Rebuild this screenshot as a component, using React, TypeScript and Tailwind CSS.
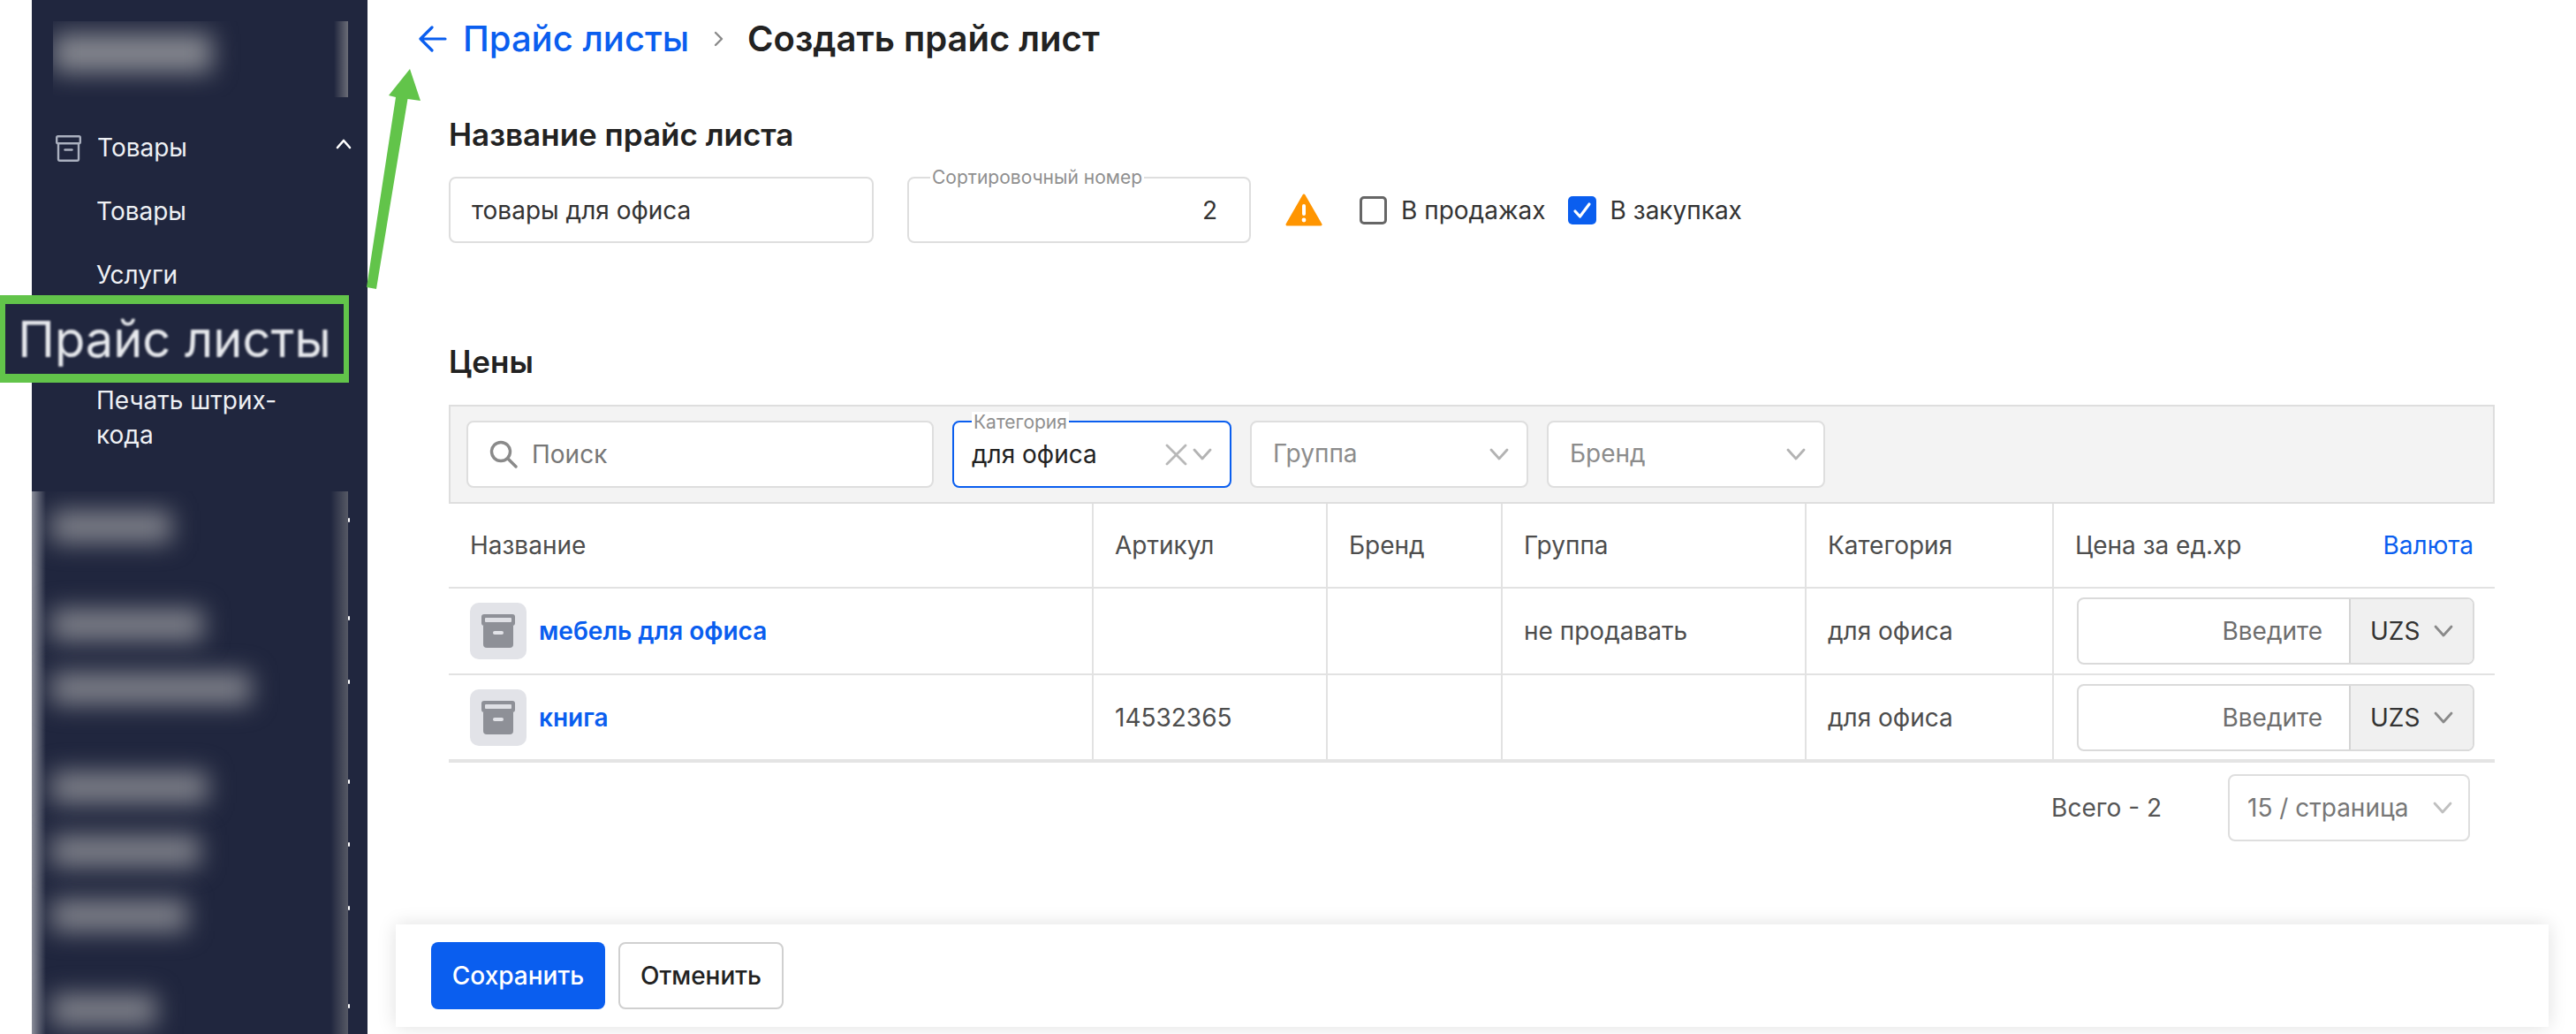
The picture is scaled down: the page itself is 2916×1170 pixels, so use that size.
import type { ReactNode } from 'react';

const blurredRows = [
  { width: 'w-[136px]', offset: 'mt-[22px]' },
  { width: 'w-[172px]', offset: 'mt-[75px]' },
  { width: 'w-[226px]', offset: 'mt-[36px]' },
  { width: 'w-[177px]', offset: 'mt-[76px]' },
  { width: 'w-[168px]', offset: 'mt-[36px]' },
  { width: 'w-[154px]', offset: 'mt-[37px]' },
  { width: 'w-[119px]', offset: 'mt-[71px]' },
];

// clipped chevrons that stick out of the blurred block
const markOffsets = ['mt-[30px]', 'mt-[106px]', 'mt-[67px]', 'mt-[108px]', 'mt-[66px]', 'mt-[67px]', 'mt-[106px]'];

const rows = [
  { name: 'мебель для офиса', sku: '', group: 'не продавать', category: 'для офиса' },
  { name: 'книга', sku: '14532365', group: '', category: 'для офиса' },
];

const tableCols = 'grid-cols-[730px_265px_198px_344px_280px_1fr]';

function Chevron({ className = 'text-[#b3b3b3]' }: { className?: string }) {
  return (
    <svg className={`h-[14px] w-[22px] shrink-0 ${className}`} viewBox="0 0 22 14" fill="none" stroke="currentColor" strokeWidth="2.8" strokeLinecap="round" strokeLinejoin="round">
      <path d="M2 2l9 10 9-10" />
    </svg>
  );
}

function ArchiveFilled() {
  return (
    <svg className="h-[38px] w-[38px]" viewBox="0 0 38 38">
      <rect x="0" y="0" width="38" height="13" rx="3" fill="#8e9097" />
      <rect x="4" y="4" width="30" height="5" rx="1" fill="#dfe0e5" />
      <path d="M2 13h34v21a4 4 0 0 1-4 4H6a4 4 0 0 1-4-4z" fill="#8e9097" />
      <rect x="13" y="19" width="12" height="4" rx="2" fill="#e2e3e8" />
    </svg>
  );
}

function SelectBox({ label }: { label: string }) {
  return (
    <div className="flex h-[76px] w-[315px] items-center justify-between rounded-[8px] border-2 border-[#dedede] bg-white pl-[24px] pr-[20px] text-[28px] text-[#8c8c8c]">
      <span className="-mt-[2px]">{label}</span>
      <Chevron />
    </div>
  );
}

function Cell({ children, last }: { children?: ReactNode; last?: boolean }) {
  return (
    <div className={`flex items-center pl-[24px] text-[28px] text-[#4d4d4d] ${last ? '' : 'border-r-2 border-[#e2e2e2]'}`}>
      {children}
    </div>
  );
}

function PriceInput() {
  return (
    <div className="ml-[2px] flex h-[76px] w-[450px] overflow-hidden rounded-[8px] border-2 border-[#dadada]">
      <div className="flex flex-1 items-center justify-end pr-[30px] text-[28px] text-[#6e6e6e]">Введите</div>
      <div className="flex w-[140px] items-center gap-[16px] border-l-2 border-[#d4d4d4] bg-[#f0f0f0] pl-[22px] text-[28px] text-[#333]">
        UZS
        <Chevron className="text-[#8a8a8a]" />
      </div>
    </div>
  );
}

export default function App() {
  return (
    <div className="relative flex h-[1170px] w-[2916px] overflow-hidden bg-white font-[Inter,'Liberation_Sans',sans-serif]">
      <aside className="ml-[36px] flex w-[380px] shrink-0 flex-col bg-[#20263e] text-[28px] text-[#eef0f4]">
        <div className="relative ml-[24px] mt-[24px] h-[86px] w-[334px] overflow-hidden">
          <div className="absolute left-0 top-[14px] h-[44px] w-[180px] bg-[#85878f] blur-[14px]" />
          <div className="absolute right-0 top-0 h-full w-[16px] bg-linear-to-l from-[#6a6c76] to-transparent" />
        </div>

        <div className="ml-[27px] mt-[43px] flex h-[30px] items-center">
          <svg className="h-[30px] w-[29px] text-[#aab0bf]" viewBox="0 0 29 30" fill="none" stroke="currentColor" strokeWidth="2.4">
            <rect x="1.2" y="1.2" width="26.6" height="8" rx="1.5" />
            <path d="M3 9v18a1.8 1.8 0 0 0 1.8 1.8h19.4A1.8 1.8 0 0 0 26 27V9" />
            <path d="M10.500 16.500h8" strokeLinecap="round" />
          </svg>
          <span className="-mt-[2px] ml-[18px]">Товары</span>
          <svg className="ml-[168px] -mt-[10px] h-[12px] w-[18px] text-white" viewBox="0 0 18 12" fill="none" stroke="currentColor" strokeWidth="2.6" strokeLinecap="round" strokeLinejoin="round">
            <path d="M2 10l7-8 7 8" />
          </svg>
        </div>
        <div className="ml-[73px] mt-[40px] leading-[32px]">Товары</div>
        <div className="ml-[73px] mt-[40px] leading-[32px]">Услуги</div>
        <div className="ml-[73px] mt-[107px] w-[240px] leading-[39px]">Печать штрих-кода</div>

        <div className="mt-[44px] flex flex-1">
          <div className="relative w-[358px] overflow-hidden">
            <div className="absolute inset-y-0 left-0 w-[16px] bg-linear-to-r from-[#8b8e9a] to-transparent" />
            <div className="absolute inset-y-0 right-0 w-[20px] bg-linear-to-l from-[#565965] to-transparent" />
            {blurredRows.map((row, i) => (
              <div key={i} className={`ml-[22px] h-[36px] bg-[#7f818a] blur-[14px] ${row.width} ${row.offset}`} />
            ))}
          </div>
          <div>
            {markOffsets.map((offset, i) => (
              <div key={i} className={`h-[5px] w-[2px] rounded-full bg-white ${offset}`} />
            ))}
          </div>
        </div>
      </aside>

      <main className="flex w-[2500px] flex-col">
        <div className="ml-[58px] flex h-[88px] items-center text-[40px] font-medium">
          <svg className="h-[30px] w-[32px] text-[#0a5eef]" viewBox="0 0 32 30" fill="none" stroke="currentColor" strokeWidth="3.2" strokeLinecap="round" strokeLinejoin="round">
            <path d="M30 15H2M15 2L2 15l13 13" />
          </svg>
          <span className="ml-[18px] text-[#0a5eef]">Прайс листы</span>
          <svg className="ml-[28px] h-[18px] w-[12px] text-[#8a8a8a]" viewBox="0 0 12 18" fill="none" stroke="currentColor" strokeWidth="2.4" strokeLinecap="round" strokeLinejoin="round">
            <path d="M2 2l7 7-7 7" />
          </svg>
          <span className="ml-[26px] font-semibold text-[#222]">Создать прайс лист</span>
        </div>

        <div className="ml-[92px] w-[2316px]">
          <h2 className="mt-[44px] h-[40px] text-[35px] font-semibold leading-[40px] text-[#222]">Название прайс листа</h2>

          <div className="mt-[28px] flex h-[75px] items-center">
            <div className="flex h-full w-[481px] items-center rounded-[8px] border-2 border-[#dedede] pl-[24px] text-[28px] text-[#333]">
              товары для офиса
            </div>
            <div className="relative ml-[38px] flex h-full w-[389px] items-center justify-end rounded-[8px] border-2 border-[#dedede] pr-[36px] text-[28px] text-[#333]">
              <span className="absolute -top-[13px] left-[24px] bg-white px-[2px] text-[21px] leading-[24px] text-[#8f8f8f]">Сортировочный номер</span>
              2
            </div>
            <svg className="ml-[39px] h-[38px] w-[42px]" viewBox="0 0 42 38">
              <path d="M21 2L40 35H2z" fill="#ff9500" stroke="#ff9500" strokeWidth="3" strokeLinejoin="round" />
              <rect x="19" y="12" width="4" height="13" rx="2" fill="#fff" />
              <circle cx="21" cy="30" r="2.400" fill="#fff" />
            </svg>
            <div className="ml-[42px] h-[32px] w-[31px] rounded-[5px] border-[3px] border-[#666]" />
            <span className="ml-[16px] text-[28px] text-[#333]">В продажах</span>
            <div className="ml-[25px] flex h-[32px] w-[32px] items-center justify-center rounded-[5px] bg-[#0a5eef]">
              <svg className="h-[20px] w-[22px] text-white" viewBox="0 0 22 20" fill="none" stroke="currentColor" strokeWidth="3.2" strokeLinecap="round" strokeLinejoin="round">
                <path d="M3 11l5.500 6L19 3" />
              </svg>
            </div>
            <span className="ml-[16px] text-[28px] text-[#333]">В закупках</span>
          </div>

          <h2 className="mt-[114px] h-[40px] text-[35px] font-semibold leading-[40px] text-[#222]">Цены</h2>

          <div className="mt-[29px] flex h-[112px] items-center gap-[21px] border-2 border-[#dedede] bg-[#f3f3f3] pl-[18px]">
            <div className="flex h-[76px] w-[529px] items-center rounded-[8px] border-2 border-[#dedede] bg-white pl-[24px] text-[28px] text-[#777]">
              <svg className="h-[32px] w-[33px] text-[#8a8a8a]" viewBox="0 0 33 32" fill="none" stroke="currentColor" strokeWidth="3.400" strokeLinecap="round">
                <circle cx="13" cy="13" r="10.500" />
                <path d="M21 21l9 9" />
              </svg>
              <span className="ml-[15px]">Поиск</span>
            </div>
            <div className="relative flex h-[76px] w-[316px] items-center rounded-[8px] border-2 border-[#0a5eef] bg-white pl-[20px] pr-[20px] text-[28px] text-[#222]">
              <span className="absolute -top-[12px] left-[20px] bg-white px-[2px] text-[21px] leading-[24px] text-[#8f8f8f]">Категория</span>
              <span className="flex-1">для офиса</span>
              <svg className="h-[25px] w-[25px] text-[#b8b8b8]" viewBox="0 0 25 25" fill="none" stroke="currentColor" strokeWidth="2.8" strokeLinecap="round">
                <path d="M2 2l21 21M23 2L2 23" />
              </svg>
              <Chevron className="ml-[6px] text-[#b3b3b3]" />
            </div>
            <SelectBox label="Группа" />
            <SelectBox label="Бренд" />
          </div>

          <div className={`grid h-[96px] border-b-2 border-[#e2e2e2] ${tableCols}`}>
            <Cell>Название</Cell>
            <Cell>Артикул</Cell>
            <Cell>Бренд</Cell>
            <Cell>Группа</Cell>
            <Cell>Категория</Cell>
            <Cell last>
              <span className="flex-1">Цена за ед.хр</span>
              <span className="pr-[24px] text-[#0a5eef]">Валюта</span>
            </Cell>
          </div>

          {rows.map((row, i) => (
            <div key={row.name} className={`grid ${tableCols} ${i === rows.length - 1 ? 'h-[99px] border-b-4 border-[#e4e4e4]' : 'h-[98px] border-b-2 border-[#e2e2e2]'}`}>
              <Cell>
                <div className="flex h-[64px] w-[64px] shrink-0 items-center justify-center rounded-[10px] bg-[#e2e3e8]">
                  <ArchiveFilled />
                </div>
                <span className="ml-[14px] font-semibold text-[#0a5eef]">{row.name}</span>
              </Cell>
              <Cell>{row.sku}</Cell>
              <Cell />
              <Cell>{row.group}</Cell>
              <Cell>{row.category}</Cell>
              <Cell last>
                <PriceInput />
              </Cell>
            </div>
          ))}

          <div className="mt-[13px] flex h-[76px] items-center justify-end pr-[28px] text-[28px] text-[#555]">
            <span>Всего - 2</span>
            <div className="ml-[75px] flex h-full w-[274px] items-center justify-between rounded-[8px] border-2 border-[#dedede] pl-[20px] pr-[18px] text-[#777]">
              15 / страница
              <Chevron className="text-[#c0c0c0]" />
            </div>
          </div>
        </div>

        <div className="ml-[32px] mt-auto mb-[8px] flex h-[116px] w-[2437px] items-center gap-[15px] bg-white pl-[40px] shadow-[0_0_20px_rgba(0,0,0,0.13)]">
          <button type="button" className="h-[76px] w-[197px] rounded-[8px] bg-[#0a5eef] text-[28px] font-medium text-white">Сохранить</button>
          <button type="button" className="h-[76px] w-[187px] rounded-[8px] border-2 border-[#d0d0d0] text-[28px] font-medium text-[#222]">Отменить</button>
        </div>
      </main>

      {/* green highlight laid over the menu */}
      <div className="absolute left-0 top-[334px] flex h-[99px] w-[395px] items-center justify-center border-x-[6px] border-y-[10px] border-[#62c44a] bg-[#20263e]">
        <span className="whitespace-nowrap text-[56px] leading-none text-[#e8eaee] blur-[1px]">Прайс листы</span>
      </div>
      <svg className="absolute left-[410px] top-[70px] h-[270px] w-[80px]" viewBox="0 0 80 270">
        <path d="M54 8L66 44L51.500 42L16 257L5 255L38 40L30 38z" fill="#62c44a" />
      </svg>
    </div>
  );
}
